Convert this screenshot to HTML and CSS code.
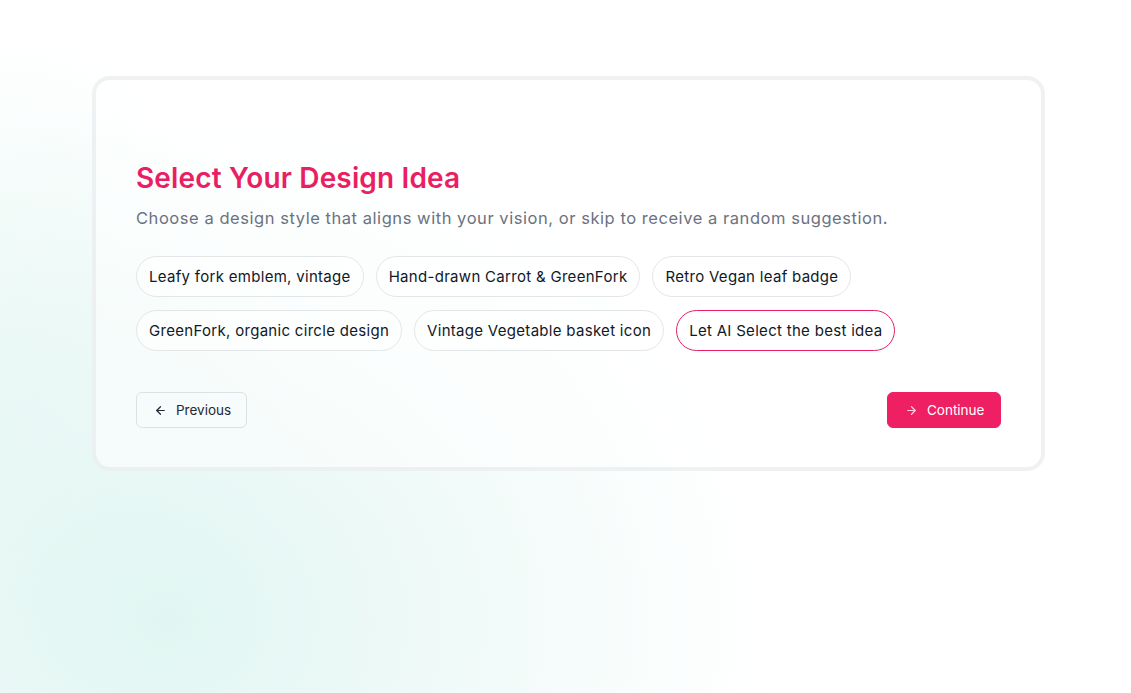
FILE: index.html
```html
<!DOCTYPE html>
<html lang="en">
<head>
<meta charset="utf-8">
<title>Select Your Design Idea</title>
<link rel="stylesheet" href="styles.css">
</head>
<body>
<div class="page">
  <section class="card">
    <h1 class="title">Select Your Design Idea</h1>
    <p class="subtitle">Choose a design style that aligns with your vision, or skip to receive a random suggestion.</p>
    <div class="chips">
      <button class="chip">Leafy fork emblem, vintage</button>
      <button class="chip">Hand-drawn Carrot &amp; GreenFork</button>
      <button class="chip">Retro Vegan leaf badge</button>
      <button class="chip">GreenFork, organic circle design</button>
      <button class="chip">Vintage Vegetable basket icon</button>
      <button class="chip chip-selected">Let AI Select the best idea</button>
    </div>
    <div class="actions">
      <button class="btn btn-prev">
        <svg class="ico" viewBox="0 0 24 24" width="13" height="13" fill="none" stroke="currentColor" stroke-width="2.2" stroke-linecap="round" stroke-linejoin="round"><path d="M19 12H5"/><path d="M12 19l-7-7 7-7"/></svg>
        <span>Previous</span>
      </button>
      <button class="btn btn-next">
        <svg class="ico ico-light" viewBox="0 0 24 24" width="13" height="13" fill="none" stroke="currentColor" stroke-width="2.2" stroke-linecap="round" stroke-linejoin="round"><path d="M5 12h14"/><path d="M12 5l7 7-7 7"/></svg>
        <span>Continue</span>
      </button>
    </div>
  </section>
</div>
</body>
</html>
```

FILE: styles.css
```css
* { box-sizing: border-box; }
html, body { margin: 0; padding: 0; }
body {
  font-family: Inter, "Noto Sans", "Liberation Sans", sans-serif;
  background: #ffffff;
  color: #111827;
  overflow: hidden;
}
.page {
  position: relative;
  width: 1131px;
  height: 693px;
  padding: 76px 0 0 92px;
  overflow: hidden;
  background:
    radial-gradient(ellipse 600px 520px at 170px 620px, rgba(222, 245, 241, 0.9) 0%, rgba(230, 247, 244, 0.7) 40%, rgba(255, 255, 255, 0) 100%),
    radial-gradient(ellipse 300px 420px at 0px 440px, rgba(226, 246, 242, 0.7) 0%, rgba(255, 255, 255, 0) 100%),
    #ffffff;
}
.card {
  position: relative;
  width: 953px;
  height: 395px;
  border: 4px solid rgba(226, 230, 234, 0.55);
  border-radius: 18px;
  background: rgba(255, 255, 255, 0.55);
  padding: 80px 40px 40px 40px;
}
.title {
  margin: 0;
  font-size: 28px;
  line-height: 36px;
  font-weight: 600;
  color: #e91e63;
  letter-spacing: 0.15px;
}
.subtitle {
  margin: 9px 0 0 0;
  font-size: 16.5px;
  line-height: 26px;
  color: #6b7280;
  letter-spacing: 0.55px;
}
.chips {
  display: flex;
  flex-wrap: wrap;
  gap: 13px 12px;
  margin-top: 25px;
  width: 800px;
}
.chip {
  font-family: inherit;
  font-size: 15px;
  line-height: 20px;
  color: #111827;
  background: rgba(255, 255, 255, 0.6);
  border: 1px solid #e3e6e9;
  border-radius: 999px;
  padding: 10px 12px;
  height: 41px;
  letter-spacing: 0.3px;
  cursor: pointer;
}
.chip-selected {
  border-color: #e91e63;
  background: #ffffff;
}
.actions {
  display: flex;
  justify-content: space-between;
  margin-top: 41px;
}
.btn {
  display: flex;
  align-items: center;
  gap: 9px;
  height: 36px;
  padding: 0 16px 0 17px;
  border-radius: 6px;
  font-family: inherit;
  font-size: 13.5px;
  cursor: pointer;
}
.btn-prev {
  background: rgba(248, 251, 251, 0.7);
  border: 1px solid #dbe2e4;
  color: #1f2937;
  width: 111px;
}
.btn-next {
  background: #ef1f63;
  border: 1px solid #ef1f63;
  color: #ffffff;
  width: 114px;
}
.ico { flex: none; }
.ico-light { color: #ffd0de; }
```
